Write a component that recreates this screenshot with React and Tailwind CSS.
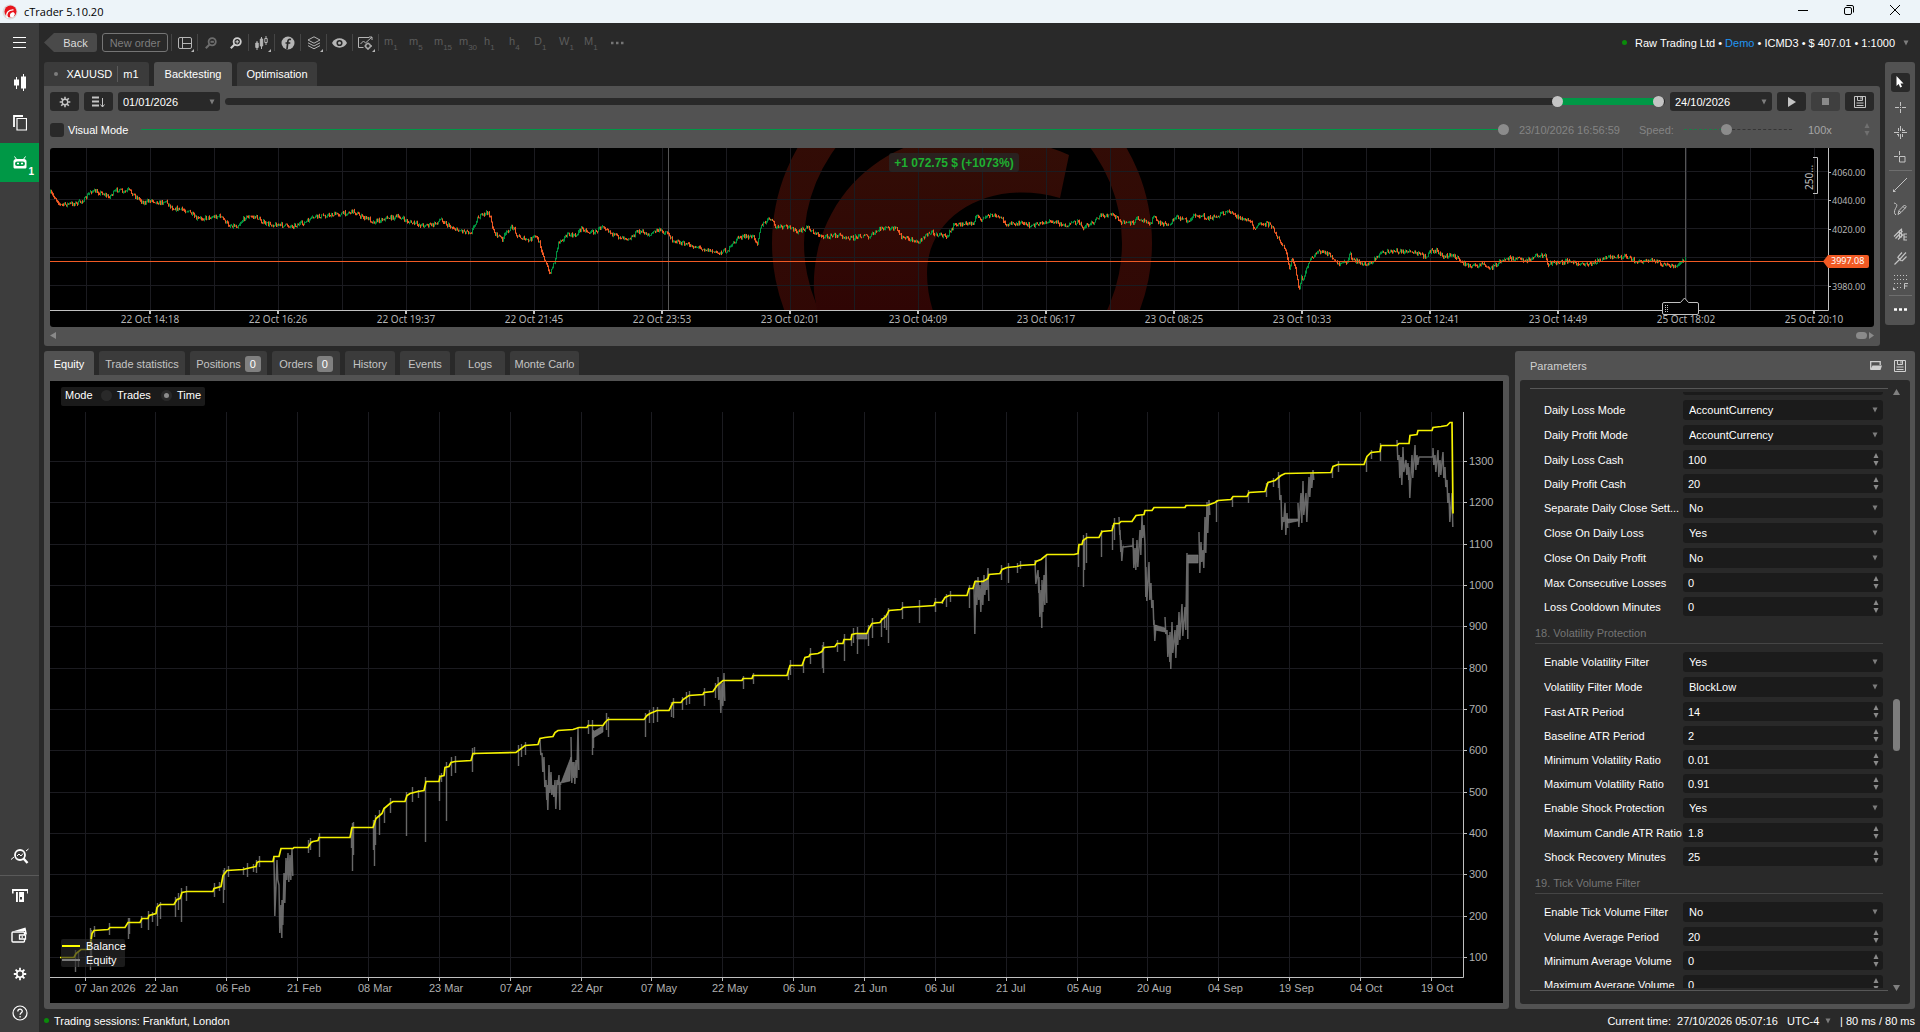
import React from 'react';

// price path of the upper chart, [x, y]
const pricePath = [
  [50, 193], [55, 198], [60, 205], [78, 203], [85, 199], [90, 191], [102, 193], [108, 197], [118, 189], [123, 193],
  [128, 190], [136, 197], [144, 203], [151, 200], [159, 203], [165, 201], [172, 208], [188, 211], [196, 219], [220, 216],
  [228, 225], [237, 226], [245, 217], [256, 217], [265, 224], [292, 226], [304, 223], [314, 217], [347, 213], [353, 211],
  [361, 217], [369, 219], [373, 222], [386, 218], [399, 217], [408, 222], [420, 225], [433, 225], [441, 219], [447, 225],
  [457, 230], [471, 232], [477, 218], [488, 212], [494, 233], [502, 239], [508, 230], [513, 227], [517, 236], [528, 241],
  [535, 236], [539, 243], [545, 262], [549, 274], [554, 262], [558, 242], [567, 235], [575, 236], [581, 228], [588, 232],
  [596, 232], [602, 225], [608, 230], [614, 236], [630, 238], [638, 231], [650, 235], [656, 230], [668, 233], [670, 239],
  [683, 244], [701, 248], [717, 253], [728, 250], [738, 237], [754, 237], [757, 243], [760, 227], [770, 218], [775, 227],
  [791, 227], [797, 233], [807, 227], [815, 234], [826, 237], [836, 235], [852, 238], [864, 235], [868, 238], [881, 228],
  [896, 229], [901, 237], [917, 242], [931, 232], [946, 237], [954, 225], [973, 223], [975, 217], [983, 219], [990, 215],
  [1001, 218], [1007, 225], [1017, 223], [1032, 226], [1044, 222], [1056, 222], [1066, 226], [1077, 222], [1083, 227],
  [1093, 222], [1099, 216], [1113, 215], [1122, 223], [1132, 223], [1138, 218], [1150, 223], [1153, 217], [1160, 224],
  [1171, 223], [1175, 217], [1189, 221], [1195, 215], [1211, 218], [1224, 213], [1230, 212], [1240, 218], [1250, 222],
  [1255, 230], [1260, 222], [1270, 225], [1280, 242], [1283, 245], [1287, 258], [1289, 270], [1291, 260], [1295, 268],
  [1297, 281], [1299, 290], [1301, 275], [1303, 281], [1307, 265], [1312, 258], [1317, 251], [1323, 253], [1330, 255],
  [1337, 265], [1347, 262], [1349, 253], [1353, 260], [1367, 265], [1375, 258], [1383, 252], [1398, 251], [1413, 253],
  [1427, 257], [1430, 251], [1437, 251], [1443, 257], [1452, 255], [1463, 263], [1472, 267], [1482, 263], [1489, 269],
  [1498, 263], [1507, 258], [1527, 260], [1537, 255], [1545, 256], [1548, 264], [1567, 261], [1577, 264], [1593, 263],
  [1607, 257], [1627, 257], [1637, 262], [1657, 261], [1663, 265], [1675, 267], [1683, 261], [1685, 260],
];

const timeTicks = [
  [150, '22 Oct 14:18'], [278, '22 Oct 16:26'], [406, '22 Oct 19:37'], [534, '22 Oct 21:45'], [662, '22 Oct 23:53'],
  [790, '23 Oct 02:01'], [918, '23 Oct 04:09'], [1046, '23 Oct 06:17'], [1174, '23 Oct 08:25'], [1302, '23 Oct 10:33'],
  [1430, '23 Oct 12:41'], [1558, '23 Oct 14:49'], [1686, '25 Oct 18:02'], [1814, '25 Oct 20:10'],
];

const priceTicks = [[171, '4060.00'], [199, '4040.00'], [228, '4020.00'], [257, ''], [285, '3980.00']];

const balance = `60,957 74,957 76,953 81,949 89,949 91,940 92,933 94,930 108,929 110,927 125,927 128,922 140,922 142,918 148,918 149,915
156,913 157,907 160,904 174,904 177,899 180,898 182,892 187,891 213,891 214,888 221,886 223,875 227,870 243,869 247,868 256,866
257,862 259,861 273,861 274,856 279,856 281,848 293,848 294,847 308,847 311,842 313,841 318,840 319,837 350,837 352,827 373,827
376,818 382,813 384,808 390,803 393,801 405,801 407,795 410,793 418,791 424,790 426,781 439,781 440,776 444,775 445,767 449,766
451,762 455,761 471,760 473,753 516,752 525,745 538,744 540,738 545,737 553,736 555,732 558,730 573,729 579,727 587,727 588,725
603,725 605,722 608,719 644,719 647,715 650,713 657,710 669,710 673,702 681,702 683,699 689,695 703,694 704,692 713,691 717,685
723,680 742,680 743,678 752,678 753,675 787,675 790,665 802,665 805,657 809,656 810,654 818,653 822,651 824,647 835,646 837,643
843,643 844,639 851,639 852,634 856,633 867,633 869,628 872,623 880,622 882,619 886,616 889,610 901,609 903,607 920,606 934,605
935,602 942,602 945,597 949,595 967,595 969,588 973,588 975,581 983,581 988,578 989,574 1000,573 1002,569 1007,567 1017,566
1020,565 1035,564 1036,561 1041,559 1047,554 1074,554 1078,553 1079,544 1082,544 1083,540 1087,537 1099,537 1102,531 1112,530
1114,523 1119,523 1121,521 1132,521 1136,515 1144,514 1145,510 1152,510 1154,507 1185,507 1186,505 1207,505 1215,502 1218,500
1231,499 1233,496 1247,496 1249,492 1265,491 1268,482 1275,480 1281,475 1285,473 1331,472 1333,466 1338,464 1364,464 1367,456
1371,452 1380,451 1381,445 1397,445 1399,443 1409,443 1410,435 1417,434 1418,430 1432,430 1433,427 1441,426 1447,425 1450,422
1452,422 1453,513`;

// single equity dips, [x, top, bottom]
const dips = [
  [75, 950, 972], [78, 952, 967], [90, 928, 970], [91, 930, 964], [94, 926, 937], [109, 923, 935], [128, 918, 939], [129, 918, 934],
  [141, 916, 928], [148, 911, 930], [152, 912, 922], [157, 903, 926], [160, 902, 919], [175, 897, 917], [178, 893, 910],
  [181, 888, 922], [186, 886, 901], [214, 883, 897], [219, 882, 891], [223, 870, 903], [224, 868, 890], [228, 866, 877],
  [243, 867, 875], [247, 863, 877], [253, 864, 872], [256, 860, 873], [259, 856, 867], [308, 840, 853], [310, 838, 850],
  [319, 833, 857], [351, 828, 848], [352, 823, 871], [353, 822, 855], [373, 820, 850], [374, 820, 866], [375, 815, 845], [379, 810, 835], [384, 807, 823],
  [390, 798, 813], [406, 792, 836], [412, 787, 802], [418, 790, 798], [425, 777, 842], [439, 775, 801], [441, 773, 782],
  [446, 762, 821], [451, 757, 776], [455, 756, 773], [472, 748, 772], [474, 747, 755], [518, 745, 766], [521, 744, 757],
  [525, 742, 755], [588, 720, 734], [592, 720, 755], [593, 730, 748], [606, 713, 730], [608, 717, 737], [645, 713, 737], [649, 710, 723],
  [653, 707, 723], [657, 707, 722], [671, 702, 717], [673, 698, 718], [682, 697, 710], [686, 692, 705], [689, 691, 704],
  [704, 688, 706], [715, 683, 698], [743, 676, 689], [753, 673, 684], [788, 668, 680], [790, 660, 675], [803, 662, 673],
  [810, 648, 664], [822, 645, 668], [823, 642, 673], [837, 640, 652], [844, 634, 661], [851, 634, 646], [853, 628, 643], [857, 627, 654],
  [868, 625, 646], [872, 618, 638], [881, 618, 637], [884, 615, 628], [886, 614, 630], [888, 608, 643], [902, 602, 619],
  [919, 600, 623], [935, 598, 612], [942, 600, 604], [946, 594, 607], [950, 591, 602], [969, 585, 608], [1001, 565, 580],
  [1008, 563, 583], [1017, 563, 573], [1020, 561, 569], [1078, 547, 567], [1083, 535, 587], [1084, 540, 570], [1086, 533, 563], [1101, 530, 557],
  [1112, 525, 550], [1114, 518, 540], [1216, 500, 522], [1232, 497, 507], [1248, 490, 503], [1266, 483, 497], [1273, 478, 487],
  [1278, 472, 488], [1332, 468, 478], [1338, 461, 472], [1366, 458, 472], [1371, 450, 459], [1380, 443, 461],
];

// longer drawdowns, every sample is [x, top, bottom]
const drawdowns = [
  [[274, 858, 916], [277, 860, 880], [279, 885, 933], [281, 905, 938], [282, 900, 925], [284, 873, 903], [286, 858, 880], [288, 853, 882], [290, 855, 880], [292, 848, 876]],
  [[540, 740, 755], [542, 753, 772], [544, 757, 787], [546, 780, 800], [547, 785, 810], [549, 765, 793], [551, 772, 795], [553, 785, 797], [555, 780, 809], [557, 780, 785], [559, 775, 810], [560, 782, 785]],
  [[571, 737, 783], [573, 762, 778], [574, 762, 784], [576, 760, 778], [578, 727, 770]],
  [[718, 677, 700], [720, 683, 713], [722, 683, 706], [724, 673, 701]],
  [[974, 586, 634], [976, 580, 605], [978, 577, 600], [980, 585, 612], [982, 580, 605], [984, 575, 595], [986, 580, 590], [988, 568, 601]],
  [[1035, 560, 584], [1038, 570, 593], [1039, 577, 617], [1041, 590, 628], [1042, 580, 612], [1044, 575, 605], [1046, 555, 603]],
  [[1119, 517, 535], [1120, 530, 552], [1121, 540, 561], [1123, 546, 547], [1132, 546, 547], [1133, 538, 568], [1135, 548, 570], [1137, 540, 567], [1140, 530, 555],
    [1142, 515, 538], [1144, 525, 540], [1145, 545, 597], [1146, 567, 601], [1149, 562, 600], [1151, 583, 608], [1153, 600, 625], [1154, 620, 641], [1156, 625, 630]],
  [[1165, 617, 634], [1167, 630, 657], [1169, 635, 662], [1170, 632, 669], [1172, 622, 653], [1175, 630, 658], [1177, 625, 645], [1179, 612, 640], [1182, 604, 636], [1185, 607, 630], [1187, 553, 639], [1188, 555, 563]],
  [[1199, 532, 573], [1201, 542, 562], [1203, 550, 568], [1205, 517, 553], [1207, 502, 533], [1209, 500, 515]],
  [[1279, 475, 500], [1281, 495, 530], [1283, 517, 522], [1285, 503, 535], [1287, 513, 528]],
  [[1298, 503, 527], [1301, 493, 523], [1303, 481, 515], [1306, 493, 522], [1309, 477, 497], [1311, 473, 488], [1313, 470, 480]],
  [[1397, 440, 460], [1399, 455, 478], [1401, 457, 485], [1403, 447, 472], [1406, 460, 475], [1408, 463, 480], [1409, 467, 498], [1412, 455, 478], [1415, 445, 470],
    [1417, 455, 465], [1419, 457, 457], [1432, 457, 457], [1433, 448, 465], [1435, 455, 472], [1438, 450, 477], [1440, 460, 475], [1443, 452, 478], [1445, 467, 487], [1447, 480, 503], [1449, 493, 522], [1452, 493, 527]],
];

const equityGaps = [
  '561,783 571,757 570,781',
  '593,732 603,726 603,732 593,738',
  '857,634 867,634 867,639 857,639',
  '1155,625 1165,628 1165,632 1155,630',
  '1188,555 1198,555 1198,563 1188,563',
  '1287,519 1298,519 1298,521 1288,523',
];

const monthTicks = [
  [85, '07 Jan 2026'], [155, '22 Jan'], [226, '06 Feb'], [297, '21 Feb'], [368, '08 Mar'], [439, '23 Mar'], [510, '07 Apr'],
  [581, '22 Apr'], [651, '07 May'], [722, '22 May'], [793, '06 Jun'], [864, '21 Jun'], [935, '06 Jul'], [1006, '21 Jul'],
  [1077, '05 Aug'], [1147, '20 Aug'], [1218, '04 Sep'], [1289, '19 Sep'], [1360, '04 Oct'], [1431, '19 Oct'],
];

const cashTicks = [
  [461, 1300], [502, 1200], [544, 1100], [585, 1000], [626, 900], [668, 800], [709, 700],
  [750, 600], [792, 500], [833, 400], [874, 300], [916, 200], [957, 100],
];

const params = [
  ['select', 'Daily Loss Mode', 'AccountCurrency'],
  ['select', 'Daily Profit Mode', 'AccountCurrency'],
  ['number', 'Daily Loss Cash', '100'],
  ['number', 'Daily Profit Cash', '20'],
  ['select', 'Separate Daily Close Sett...', 'No'],
  ['select', 'Close On Daily Loss', 'Yes'],
  ['select', 'Close On Daily Profit', 'No'],
  ['number', 'Max Consecutive Losses', '0'],
  ['number', 'Loss Cooldown Minutes', '0'],
  ['heading', '18. Volatility Protection'],
  ['select', 'Enable Volatility Filter', 'Yes'],
  ['select', 'Volatility Filter Mode', 'BlockLow'],
  ['number', 'Fast ATR Period', '14'],
  ['number', 'Baseline ATR Period', '2'],
  ['number', 'Minimum Volatility Ratio', '0.01'],
  ['number', 'Maximum Volatility Ratio', '0.91'],
  ['select', 'Enable Shock Protection', 'Yes'],
  ['number', 'Maximum Candle ATR Ratio', '1.8'],
  ['number', 'Shock Recovery Minutes', '25'],
  ['heading', '19. Tick Volume Filter'],
  ['select', 'Enable Tick Volume Filter', 'No'],
  ['number', 'Volume Average Period', '20'],
  ['number', 'Minimum Average Volume', '0'],
  ['number', 'Maximum Average Volume', '0'],
];

const buildCandles = () => {
  let seed = 7;
  const rnd = () => {
    seed = (seed * 16807) % 2147483647;
    return seed / 2147483647;
  };
  let up = '';
  let down = '';
  let prev = pricePath[0][1];
  let i = 0;
  for (let x = 50; x <= 1685; x += 1) {
    while (i < pricePath.length - 2 && pricePath[i + 1][0] < x) i += 1;
    const [x0, y0] = pricePath[i];
    const [x1, y1] = pricePath[i + 1];
    const y = y0 + ((y1 - y0) * (x - x0)) / (x1 - x0) + (rnd() - 0.5) * 4;
    const top = Math.min(prev, y) - rnd() * 1.6;
    const bottom = Math.max(prev, y) + rnd() * 1.6;
    const bar = `M${x + 0.5} ${top.toFixed(1)}V${bottom.toFixed(1)}`;
    if (y < prev) up += bar;
    else down += bar;
    prev = y;
  }
  return { up, down };
};

const candles = buildCandles();

const Icon = ({ w = 16, h = 16, box, children, className = '' }) => (
  <svg
    width={w}
    height={h}
    viewBox={box || `0 0 ${w} ${h}`}
    fill="none"
    stroke="currentColor"
    aria-hidden="true"
    className={`shrink-0 ${className}`}
  >
    {children}
  </svg>
);

const GearIcon = ({ size = 14 }) => (
  <Icon w={size} h={size} box="0 0 14 14">
    <circle cx="7" cy="7" r="3.2" strokeWidth="1.6" />
    <path strokeWidth="1.8" d="M7 .8v2.6M7 10.6v2.6M.8 7h2.6M10.6 7h2.6M2.6 2.6l1.9 1.9M9.5 9.5l1.9 1.9M11.4 2.6L9.5 4.5M4.5 9.5l-1.9 1.9" />
  </Icon>
);

const SaveIcon = () => (
  <Icon w={12} h={12}>
    <path d="M.5.5h11v11H.5z" />
    <path d="M3.500 1v3.500h5V1M7 1v2.500M2.500 7h7M2.500 9.500h7" />
  </Icon>
);

const DownArrow = ({ className = '' }) => (
  <Icon w={6} h={6} className={`pointer-events-none text-[#7d7d7d] ${className}`}>
    <path d="M.5.5h5L3 5.500z" fill="currentColor" stroke="none" />
  </Icon>
);

const Spinner = ({ className = '' }) => (
  <Icon w={6} h={13} className={`pointer-events-none ${className}`}>
    <path d="M3 0l2.500 5h-5zM3 13L.5 8h5z" fill="currentColor" stroke="none" />
  </Icon>
);

const Grip = () => (
  <div className="w-5 h-[4px] bg-[radial-gradient(#a5a5a5_45%,transparent_50%)] bg-[length:2px_2px]" />
);

const TitleBar = () => (
  <header className="flex items-center h-[23px] shrink-0 bg-[#edf4f9] text-black">
    <Icon w={16} h={16} className="ml-[2px]">
      <circle cx="8" cy="8" r="7.500" fill="#dcdcdc" stroke="none" />
      <circle cx="8.500" cy="7.500" r="6" fill="#e8141c" stroke="none" />
      <path d="M5.500 14C3.500 9.500 6 5.500 11.500 5.800" stroke="#fff" strokeWidth="1.300" />
      <path d="M8.500 13.500c-1.500-3 .3-5.500 3.200-5.200L13 10l-1.500 3z" fill="#fff" stroke="none" />
    </Icon>
    <h1 className="ml-[6px] text-[11px] leading-4 font-['Open_Sans',sans-serif]">cTrader 5.10.20</h1>
    <div className="ml-auto pr-[2px] flex self-start">
      <button type="button" aria-label="Minimize" className="w-[46px] h-[20px] grid place-items-center">
        <Icon w={10} h={10}><path d="M0 5.500h10" /></Icon>
      </button>
      <button type="button" aria-label="Restore" className="w-[46px] h-[20px] grid place-items-center">
        <Icon w={10} h={10}>
          <rect x=".5" y="2.500" width="7" height="7" rx="1.500" />
          <path d="M2.500.5h5.500a1.500 1.500 0 011.500 1.500v5.500" />
        </Icon>
      </button>
      <button type="button" aria-label="Close" className="w-[46px] h-[20px] grid place-items-center">
        <Icon w={10} h={10}><path d="M0 0l10 10M10 0L0 10" /></Icon>
      </button>
    </div>
  </header>
);

const SideButton = ({ label, children, className = '' }) => (
  <button type="button" aria-label={label} className={`relative h-[39px] w-full grid place-items-center text-white ${className}`}>
    {children}
  </button>
);

const Sidebar = () => (
  <nav className="w-[39px] shrink-0 bg-[#3d3d3d] flex flex-col justify-between">
    <div className="flex flex-col gap-px">
      <SideButton label="Menu">
        <Icon w={13} h={13}><path d="M0 1.500h13M0 6.500h13M0 11.500h13" /></Icon>
      </SideButton>
      <SideButton label="Trade">
        <Icon w={14} h={17}>
          <path d="M3.500 3v12M10.500 0v17" />
          <path d="M1 5.500h5v6H1zM8 2.500h5v12H8z" fill="currentColor" stroke="none" />
        </Icon>
      </SideButton>
      <SideButton label="Copy">
        <Icon w={14} h={16}>
          <path d="M4 3.500h9.500v11.500H4z" strokeWidth="1.200" />
          <path d="M1 12V1h9" strokeWidth="1.800" />
        </Icon>
      </SideButton>
      <SideButton label="Algo" className="bg-[#009846]">
        <Icon w={14} h={14}>
          <path d="M1.500.5L4 4M12.500.5L10 4" />
          <path d="M3 3h8c1.500 0 2.500 1 2.500 2.500V11c0 1-.8 1.500-1.500 1.500H2c-.7 0-1.500-.5-1.500-1.500V5.500C.5 4 1.500 3 3 3z" fill="currentColor" stroke="none" />
          <rect x="2" y="5.500" width="10" height="4.500" rx="2.200" fill="#009846" stroke="none" />
          <path d="M4 7.500h2M8 7.500h2" strokeWidth="1.600" />
        </Icon>
        <span className="absolute right-[5px] bottom-[2px] text-[10px] leading-4 font-bold">1</span>
      </SideButton>
    </div>
    <div className="flex flex-col">
      <SideButton label="Analyze" className="border-b border-[#5a5a5a]">
        <Icon w={18} h={16}>
          <circle cx="9" cy="7" r="5" strokeWidth="1.800" />
          <path d="M12.500 10.500l4 4.500" strokeWidth="2.400" />
          <path d="M0 11.500L3 9M15 3l2.500-2M6 8l2-2 2 2 2-2.500" />
        </Icon>
      </SideButton>
      <SideButton label="Deposit">
        <Icon w={16} h={13}>
          <path d="M0 1h16v3.500" strokeWidth="1.800" />
          <path d="M.8 1v3.500" strokeWidth="1.600" />
          <path d="M4 3h8V13H4z" fill="currentColor" stroke="none" />
          <path d="M6.500 3v10" stroke="#3d3d3d" strokeWidth="1.200" />
          <path d="M8 8h2v2.500H8z" fill="#3d3d3d" stroke="none" />
        </Icon>
      </SideButton>
      <SideButton label="Wallet">
        <Icon w={17} h={16}>
          <rect x="1" y="5" width="12.500" height="10" rx="1" strokeWidth="1.400" />
          <path d="M3 4L14.500.5l1.500 7-2-.5V4z" fill="currentColor" stroke="none" />
          <path d="M8.500 8h6v4h-6z" fill="#3d3d3d" strokeWidth="1.300" />
          <path d="M10.500 10h1.500" strokeWidth="1.500" />
        </Icon>
      </SideButton>
      <SideButton label="Settings"><GearIcon size={14} /></SideButton>
      <SideButton label="Help">
        <Icon w={16} h={16}>
          <circle cx="8" cy="8" r="7" strokeWidth="1.200" />
          <path d="M5.800 6.500c0-3 4.500-3 4.500-.3 0 1.600-2.200 1.700-2.200 3.600M8.100 11v1.500" strokeWidth="1.300" />
        </Icon>
      </SideButton>
    </div>
  </nav>
);

const ToolButton = ({ label, children, divided = true, menu = false }) => (
  <>
    {divided && <span className="w-px h-[17px] bg-[#454545]" />}
    <button type="button" aria-label={label} className="relative w-[25px] h-[20px] grid place-items-center text-[#b5b5b5]">
      {children}
      {menu && (
        <Icon w={3} h={3} className="absolute right-[3px] bottom-[1px]">
          <path d="M3 0v3H0z" fill="currentColor" stroke="none" />
        </Icon>
      )}
    </button>
  </>
);

const periods = [['m', '1'], ['m', '5'], ['m', '15'], ['m', '30'], ['h', '1'], ['h', '4'], ['D', '1'], ['W', '1'], ['M', '1']];

const Toolbar = () => (
  <div className="flex items-center h-[39px] shrink-0 px-[5px]">
    <button type="button" className="w-[53px] h-[19px] pl-[10px] rounded-r-[3px] bg-[#4a4a4a] text-[#dcdcdc] [clip-path:polygon(0_50%,10px_0,100%_0,100%_100%,10px_100%)]">
      Back
    </button>
    <button type="button" className="w-[66px] h-[19px] ml-[5px] mr-[3px] rounded-[3px] border border-[#757575] text-[#7d7d7d]">
      New order
    </button>
    <ToolButton label="Layout" menu>
      <Icon w={14} h={12}><rect x=".5" y=".5" width="13" height="11" rx="1.500" /><path d="M4.500.5v11M4.500 6.500h9" /></Icon>
    </ToolButton>
    <ToolButton label="Zoom out">
      <Icon w={12} h={12} className="text-[#6d6d6d]">
        <circle cx="7.200" cy="4.800" r="3.600" strokeWidth="1.800" /><path d="M4.500 7.500L.8 11.200" strokeWidth="2" /><path d="M5.500 4.800h3.400" strokeWidth="2" />
      </Icon>
    </ToolButton>
    <ToolButton label="Zoom in" divided={false}>
      <Icon w={12} h={12} className="text-[#cfcfcf]">
        <circle cx="7.200" cy="4.800" r="3.600" strokeWidth="1.800" /><path d="M4.500 7.500L.8 11.200" strokeWidth="2" /><path d="M5.500 4.800h3.400M7.200 3v3.600" />
      </Icon>
    </ToolButton>
    <ToolButton label="Chart type" menu>
      <Icon w={13} h={14}>
        <path d="M2 5v9M6.500 1v12M11 0v9" /><path d="M.8 7h2.400v4.500H.8zM5.300 3h2.400v7H5.300z" fill="currentColor" /><path d="M9.800 2.500h2.400v4H9.800z" fill="#292929" />
      </Icon>
    </ToolButton>
    <ToolButton label="Indicators">
      <Icon w={14} h={14}>
        <circle cx="7" cy="7" r="6.500" fill="currentColor" stroke="none" />
        <path d="M10 3.500C7.500 2.800 7 4 6.800 6L6 13M4.500 7h4.800" stroke="#292929" strokeWidth="1.700" />
      </Icon>
    </ToolButton>
    <ToolButton label="Layers" menu>
      <Icon w={14} h={14}><path d="M7 .8l6 3.200-6 3.200L1 4zM1 6.800L7 10l6-3.200M1 9.600l6 3.200 6-3.200" /></Icon>
    </ToolButton>
    <ToolButton label="Visibility">
      <Icon w={15} h={10}>
        <path d="M0 5C3-1.200 12-1.200 15 5 12 11.200 3 11.200 0 5z" fill="currentColor" stroke="none" />
        <circle cx="7.500" cy="5" r="2.300" stroke="#292929" strokeWidth="1.600" />
      </Icon>
    </ToolButton>
    <ToolButton label="Chart settings" menu>
      <Icon w={15} h={14}>
        <path d="M5.500 11.500H.5V1.500H11M2.500 8l3-3 2 2L14 1M11 1h3v3" />
        <circle cx="10" cy="10" r="2.300" strokeWidth="1.300" /><path d="M10 6.500v1M10 12.500v1.500M6.500 10h1M12.500 10H14" strokeWidth="1.300" />
      </Icon>
    </ToolButton>
    <span className="w-px h-[17px] bg-[#454545]" />
    {periods.map(([unit, n]) => (
      <button key={unit + n} type="button" className="w-[25px] h-[20px] pl-[5px] flex text-[#5c5c5c]">
        <span className="text-[11px] leading-4">{unit}</span>
        <sub className="self-end text-[8px] leading-[10px] bottom-0">{n}</sub>
      </button>
    ))}
    <button type="button" aria-label="More" className="w-[25px] h-[20px] grid place-items-center text-[#757575]">
      <Icon w={14} h={4}><path d="M1 2h2.500M6 2h2.500M11 2h2.500" strokeWidth="2.500" /></Icon>
    </button>
    <div className="ml-auto flex items-center text-white pr-[6px]">
      <span className="size-[5px] rounded-full bg-[#0a8a0a] mr-[8px]" />
      <span>Raw Trading Ltd • <a href="#demo" className="text-[#2196f3]">Demo</a> • ICMD3 • $ 407.01 • 1:1000</span>
      <DownArrow className="ml-[8px]" />
    </div>
  </div>
);

const DateSelect = ({ label, value }) => (
  <div className="relative flex items-center w-[102px]">
    <select aria-label={label} className="appearance-none w-full h-[19px] pl-[5px] rounded-[3px] bg-[#292929] text-white">
      <option>{value}</option>
    </select>
    <DownArrow className="absolute right-[5px]" />
  </div>
);

const SquareButton = ({ label, children, disabled }) => (
  <button
    type="button"
    aria-label={label}
    disabled={disabled}
    className="w-[29px] h-[19px] grid place-items-center rounded-[3px] bg-[#292929] text-[#c4c4c4] disabled:bg-[#3f3f3f] disabled:text-[#8a8a8a]"
  >
    {children}
  </button>
);

const DateRange = () => (
  <div className="relative flex-1 h-[19px] flex items-center">
    <div className="w-full h-[7px] rounded-full bg-[#292929] flex">
      <div className="ml-[92.6%] w-[7%] bg-[#009846]" />
    </div>
    <span className="absolute left-[92.6%] -ml-[6px] size-[11px] rounded-full bg-[#c4c4c4]" />
    <span className="absolute left-[99.6%] -ml-[6px] size-[11px] rounded-full bg-[#c4c4c4]" />
    <input type="range" aria-label="Range start" min="0" max="1000" defaultValue="926" className="absolute inset-0 w-full opacity-0" />
    <input type="range" aria-label="Range end" min="0" max="1000" defaultValue="996" className="absolute inset-0 w-full opacity-0" />
  </div>
);

const PriceChart = () => (
  <svg viewBox="50 148 1824 179" className="block w-full rounded-[3px] bg-black font-['Noto_Sans',sans-serif]" role="img" aria-label="XAUUSD m1 chart">
    <defs>
      <clipPath id="plot"><rect x="50" y="148" width="1778" height="162" /></clipPath>
      <linearGradient id="mark" x1="0" y1="0" x2="0" y2="1">
        <stop offset="0" stopColor="#330e06" />
        <stop offset="1" stopColor="#2f0504" />
      </linearGradient>
    </defs>
    <g clipPath="url(#plot)" fill="url(#mark)">
      <path fillRule="evenodd" d="M772 243a190 190 0 10380 0a190 190 0 10-380 0zM804 243a159 159 0 10318 0a159 159 0 10-318 0z" />
      <path d="M814 292C810 200 885 130 975 136C1015 138 1045 144 1069 155L1060 198C990 178 927 215 927 273Q927 292 933 311H817z" />
    </g>
    <path
      stroke="#1b1b20"
      d={`${timeTicks.map(([x]) => `M${x - 63.5} 148V310M${x + 0.5} 148V310`).join('')}M1750.5 148V310${priceTicks.map(([y]) => `M50 ${y + 0.5}H1828`).join('')}`}
    />
    <path stroke="#565656" d="M668.5 148V310M1685.500 148V310" />
    <path stroke="#00923f" d={candles.up} />
    <path stroke="#f15a24" d={candles.down} />
    <path stroke="#f15a24" strokeWidth="1" d="M50 261.500H1826" />
    <path stroke="#c0c0c0" fill="none" d="M50 310.500H1828.500V148" />
    <path stroke="#c0c0c0" strokeWidth="2" d={timeTicks.map(([x]) => `M${x} 311v3`).join('')} />
    <g fill="#b4b4b4" fontSize="10" textAnchor="middle">
      {timeTicks.map(([x, label]) => <text key={label} x={x} y="323">{label}</text>)}
    </g>
    <g fill="#b4b4b4" fontSize="9">
      {priceTicks.filter(([, label]) => label).map(([y, label]) => (
        <g key={label}>
          <path stroke="#c0c0c0" d={`M1829 ${y + 1.5}h2`} />
          <text x="1832" y={y + 5}>{label}</text>
        </g>
      ))}
    </g>
    <path d="M1823 261.500l5-6.500h39q2 0 2 2v9q0 2-2 2h-39z" fill="#f15a24" />
    <text x="1831" y="264" fontSize="9" fill="#fff">3997.08</text>
    <path fill="#000" stroke="#c0c0c0" d="M1664 302.500h16.500l4-4.500l4 4.500h8.500q1.500 0 1.500 1.500v9q0 1.500-1.500 1.500h-33q-1.500 0-1.500-1.500v-9q0-1.500 1.500-1.500z" />
    <path stroke="#c0c0c0" strokeDasharray="1 1" d="M1665.500 305v7M1667.500 305v7" />
    <path stroke="#c0c0c0" fill="none" d="M1813 157.500h4.500v36h-4.500" />
    <text transform="translate(1813 190) rotate(-90)" fontSize="10" fill="#c0c0c0">250...</text>
    <rect x="889" y="153" width="130" height="19" rx="3" fill="#282828" fillOpacity=".75" />
    <text x="954" y="167" textAnchor="middle" fontSize="12" fontWeight="700" fill="#1fb030" className="font-['Liberation_Sans',sans-serif]">+1 072.75 $ (+1073%)</text>
  </svg>
);

const topTab = 'h-6 rounded-t-[3px] bg-[#3b3b3b] text-white flex items-center justify-center';

const Backtesting = () => (
  <section className="flex-1 min-w-0">
    <div className="flex gap-[5px]">
      <button type="button" className={`${topTab} w-[105px]`}>
        <span className="size-1 rounded-full bg-[#7d7d7d] mr-2" />
        XAUUSD
        <span className="w-px h-4 bg-[#5a5a5a] mx-[5px]" />
        m1
      </button>
      <button type="button" className="h-6 w-[78px] rounded-t-[3px] bg-[#525252] text-white">Backtesting</button>
      <button type="button" className={`${topTab} w-20`}>Optimisation</button>
    </div>
    <div className="rounded-[3px] rounded-tl-none bg-[#525252] px-[6px] pt-[6px]">
      <div className="flex gap-[5px]">
        <SquareButton label="Settings"><GearIcon size={12} /></SquareButton>
        <SquareButton label="Optimisation order">
          <Icon w={13} h={12}>
            <path d="M0 1.500h7M0 5.500h7M0 9.500h7" strokeWidth="2" /><path d="M10.500 2v9M8.500 8.500l2 2.500 2-2.500" />
          </Icon>
        </SquareButton>
        <DateSelect label="From" value="01/01/2026" />
        <DateRange />
        <DateSelect label="To" value="24/10/2026" />
        <SquareButton label="Start">
          <Icon w={8} h={10}><path d="M0 0l8 5-8 5z" fill="currentColor" stroke="none" /></Icon>
        </SquareButton>
        <SquareButton label="Stop" disabled>
          <Icon w={7} h={7}><path d="M0 0h7v7H0z" fill="currentColor" stroke="none" /></Icon>
        </SquareButton>
        <SquareButton label="Save"><SaveIcon /></SquareButton>
      </div>
      <div className="flex items-center h-[37px]">
        <label className="flex items-center w-[91px] text-white">
          <input type="checkbox" className="appearance-none size-[14px] mr-1 rounded-[3px] bg-[#292929]" />
          Visual Mode
        </label>
        <div className="relative flex-1 flex items-center h-[13px]">
          <div className="w-full h-px bg-[#009846]" />
          <span className="absolute -right-px size-[11px] rounded-full bg-[#8c8c8c]" />
          <input type="range" aria-label="Progress" defaultValue="100" disabled className="absolute inset-0 w-full opacity-0" />
        </div>
        <span className="w-[131px] pl-[11px] text-[#848484]">23/10/2026 16:56:59</span>
        <label htmlFor="speed" className="w-[45px] text-[#848484]">Speed:</label>
        <div className="relative w-[108px] flex items-center h-[13px]">
          <span className="w-2/5 border-t border-dashed border-[#1f7a48]" />
          <span className="w-3/5 border-t border-dashed border-[#353535]" />
          <span className="absolute left-[37px] size-[11px] rounded-full bg-[#8c8c8c]" />
          <input id="speed" type="range" defaultValue="40" disabled className="absolute inset-0 w-full opacity-0" />
        </div>
        <div className="w-[82px] pl-4 pr-1 flex items-center justify-between text-[#a5a5a5]">
          100x
          <Spinner className="text-[#707070]" />
        </div>
      </div>
      <PriceChart />
      <div className="flex items-center justify-between h-[19px] pb-[3px] text-[#8a8a8a]">
        <Icon w={6} h={7}><path d="M6 0v7L0 3.500z" fill="currentColor" stroke="none" /></Icon>
        <Icon w={18} h={7}>
          <rect width="11" height="7" rx="3.500" fill="currentColor" stroke="none" /><path d="M13 0v7l5-3.500z" fill="currentColor" stroke="none" />
        </Icon>
      </div>
    </div>
  </section>
);

const DrawButton = ({ label, active, children }) => (
  <button type="button" aria-label={label} className={`w-[19px] h-[19px] mb-[6px] grid place-items-center rounded-[3px] text-[#c4c4c4] ${active ? 'bg-[#292929]' : ''}`}>
    {children}
  </button>
);

const DrawTools = () => (
  <aside className="w-[30px] h-[263px] shrink-0 rounded-[3px] bg-[#525252] pt-1 flex flex-col items-center">
    <Grip />
    <div className="pt-[3px] flex flex-col items-center">
      <DrawButton label="Pointer" active>
        <Icon w={8} h={12}><path d="M.5 0v10l2.200-2 1.500 3.500 1.800-.8L4.500 7.500H7.500z" fill="#fff" stroke="none" /></Icon>
      </DrawButton>
      <DrawButton label="Crosshair">
        <Icon w={11} h={11}><path d="M5.500 0v4M5.500 7v4M0 5.500h4M7 5.500h4M5 5.500h1" /></Icon>
      </DrawButton>
      <DrawButton label="Magnet crosshair">
        <Icon w={13} h={13}><path d="M6.500 0v5M6.500 8v5M0 6.500h5M8 6.500h5M4.500 2v3M8.500 8v3M3 8.500h2M8.500 4.500h2.500M4.500 8.500v2M8.500 2.500v2.500" /></Icon>
      </DrawButton>
      <DrawButton label="Marker">
        <Icon w={12} h={12}><path d="M5.500 0v4M0 5.500h4M5.500 5.500h5.500V11H5.500z" /></Icon>
      </DrawButton>
    </div>
    <div className="w-[23px] -mt-[3px] mb-1 border-t border-[#6e6e6e]" />
    <DrawButton label="Line">
      <Icon w={15} h={15}><path d="M1.500 13.500L14 1" /><path d="M0 12v3h3z" fill="currentColor" stroke="none" /></Icon>
    </DrawButton>
    <DrawButton label="Pencil">
      <Icon w={14} h={14}><path d="M1 1c4 1 3 3 1.500 5.500S1 12 3 13M5 12.500l1-4L11.500 3l1.800 1.800L8 10.500zM10 4.500l2 2M6 9l2 1.500" /></Icon>
    </DrawButton>
    <DrawButton label="Patterns">
      <Icon w={15} h={14}><path d="M1 9.500L8 2.500M2.500 11.500L9.500 4M5 12.500L10 7.500M6.500 3v9M8.500 1.500v9M14 7h-3v6h3M11 10h3" strokeWidth="1.200" /></Icon>
    </DrawButton>
    <DrawButton label="Pitchfork">
      <Icon w={13} h={14}><path d="M.5 13.500L8 6M3.500 6l4 4M4 6l4-4.500M6 8l6-6.500M8 10l4.500-4.500" strokeWidth="1.200" /></Icon>
    </DrawButton>
    <DrawButton label="Fibonacci">
      <Icon w={15} h={15}>
        <path strokeDasharray="1 2" d="M1 .5h14M1 4.500h14M1 8.500h9M4 12.500h6" /><path d="M11.500 14V8.500H15M11.500 11h3" /><path d="M0 12v3h3z" fill="currentColor" stroke="none" />
      </Icon>
    </DrawButton>
    <div className="w-[23px] -mt-[3px] mb-1 border-t border-[#6e6e6e]" />
    <DrawButton label="More tools">
      <Icon w={13} h={3} className="text-white"><path d="M0 1.500h3M5 1.500h3M10 1.500h3" strokeWidth="2.600" /></Icon>
    </DrawButton>
  </aside>
);

const EquityChart = () => (
  <svg viewBox="50 406 1453 597" className="block w-full flex-1 min-h-0 font-['Liberation_Sans',sans-serif]" role="img" aria-label="Balance and equity">
    <path
      stroke="#1b1b20"
      d={`${monthTicks.map(([x]) => `M${x + 0.5} 412V977`).join('')}${cashTicks.map(([y]) => `M50 ${y + 0.5}H1463`).join('')}`}
    />
    <g fill="none" stroke="#8a8a8a" strokeOpacity=".75">
      <path strokeWidth="1.4" d={dips.map(([x, top, bottom]) => `M${x + 0.5} ${top}V${bottom}`).join('')} />
      {drawdowns.map((zone) => (
        <polyline
          key={zone[0][0]}
          strokeWidth="1.5"
          strokeLinejoin="bevel"
          points={zone.map(([x, top, bottom]) => `${x},${top} ${x + 0.8},${bottom}`).join(' ')}
        />
      ))}
    </g>
    {equityGaps.map((points) => <polygon key={points} points={points} fill="#6b6b6b" stroke="#808080" strokeWidth=".6" />)}
    <polyline points={balance} fill="none" stroke="#f5f200" strokeWidth="1.7" transform="translate(0 .5)" />
    <path stroke="#c0c0c0" fill="none" d="M50 977.500H1463.500V412" />
    <path
      stroke="#c0c0c0"
      d={`${monthTicks.map(([x]) => `M${x + 0.5} 978v3`).join('')}${cashTicks.map(([y]) => `M1464 ${y + 0.5}h3`).join('')}`}
    />
    <g fill="#b0b0b0" fontSize="11">
      {monthTicks.map(([x, label]) => <text key={label} x={x - 10} y="992">{label}</text>)}
      {cashTicks.map(([y, label]) => <text key={label} x="1469" y={y + 4}>{label}</text>)}
    </g>
    <rect x="61" y="939" width="64" height="28" rx="2" fill="#2a2a2a" fillOpacity=".65" />
    <path stroke="#ffff00" strokeWidth="2" d="M62 946h18" />
    <path stroke="#7d7d7d" strokeWidth="2" d="M62 960h18" />
    <g fill="#fff" fontSize="11">
      <text x="86" y="950">Balance</text>
      <text x="86" y="964">Equity</text>
    </g>
  </svg>
);

const ResultTab = ({ width, active, count, children }) => (
  <button
    type="button"
    className={`${width} h-6 pt-px rounded-t-[3px] flex items-center justify-center whitespace-nowrap ${active ? 'bg-[#525252] text-white' : 'bg-[#3b3b3b] text-[#c4c4c4]'}`}
  >
    {children}
    {count && <span className="ml-[4px] w-4 h-4 rounded-[3px] bg-[#808080] text-white leading-4">{count}</span>}
  </button>
);

const Results = () => (
  <section className="flex-1 min-w-0 flex flex-col">
    <div className="flex gap-[5px]">
      <ResultTab width="w-[50px]" active>Equity</ResultTab>
      <ResultTab width="w-[86px]">Trade statistics</ResultTab>
      <ResultTab width="w-[77px]" count="0">Positions</ResultTab>
      <ResultTab width="w-[68px]" count="0">Orders</ResultTab>
      <ResultTab width="w-[50px]">History</ResultTab>
      <ResultTab width="w-[50px]">Events</ResultTab>
      <ResultTab width="w-[50px]">Logs</ResultTab>
      <ResultTab width="w-[69px]">Monte Carlo</ResultTab>
    </div>
    <div className="flex-1 min-h-0 flex rounded-[3px] rounded-tl-none bg-[#525252] p-[6px]">
      <div className="flex-1 min-w-0 flex flex-col bg-black pt-[6px]">
        <fieldset className="self-start flex items-center h-[19px] ml-[11px] px-[4px] rounded-[2px] bg-[#1a1a1a] text-white">
          <span className="w-9">Mode</span>
          <label className="flex items-center w-[60px]">
            <input type="radio" name="mode" className="appearance-none size-[11px] mr-[5px] rounded-full bg-[#292929]" />
            Trades
          </label>
          <label className="flex items-center">
            <input type="radio" name="mode" defaultChecked className="appearance-none size-[11px] mr-[5px] rounded-full border-[3px] border-[#292929] bg-[#8c8c8c]" />
            Time
          </label>
        </fieldset>
        <EquityChart />
      </div>
    </div>
  </section>
);

const ParamRow = ({ type, label, value, id }) => (
  <div className="flex items-center pl-[9px]">
    <label htmlFor={id} className="flex-1 min-w-0 whitespace-nowrap text-white">{label}</label>
    <div className="relative flex items-center w-[200px]">
      {type === 'select' ? (
        <>
          <select id={id} className="appearance-none w-full h-5 pl-[6px] rounded-[3px] bg-[#1b1b1b] text-white">
            <option>{value}</option>
          </select>
          <DownArrow className="absolute right-[5px]" />
        </>
      ) : (
        <>
          <input id={id} type="text" inputMode="decimal" defaultValue={value} className="w-full h-[19px] pl-[5px] rounded-[3px] bg-[#1b1b1b] text-white" />
          <Spinner className="absolute right-1 text-[#8a8a8a]" />
        </>
      )}
    </div>
  </div>
);

const Parameters = () => (
  <aside className="w-[400px] shrink-0 flex flex-col rounded-[3px] bg-[#525252] px-[5px] pb-[5px]">
    <div className="h-[29px] shrink-0 flex items-center text-[#d0d0d0]">
      <span className="w-[4px] h-5 bg-[radial-gradient(#a5a5a5_45%,transparent_50%)] bg-[length:2px_2px]" />
      <h2 className="ml-[6px] mr-auto">Parameters</h2>
      <button type="button" aria-label="Open" className="mr-3">
        <Icon w={12} h={9}><path d="M.7 8V.7h9.500V4" strokeWidth="1.300" /><path d="M2.500 4.500H12L10.500 9H0z" fill="currentColor" stroke="none" /></Icon>
      </button>
      <button type="button" aria-label="Save parameters" className="mr-1"><SaveIcon /></button>
    </div>
    <div className="flex-1 min-h-0 flex rounded-[3px] bg-[#292929] pl-[10px] pt-2 pb-[13px]">
      <div className="w-[358px] flex flex-col border-y border-[#575757] pt-[3px] pb-[2px]">
        <div className="flex-1 min-h-0 overflow-hidden pl-[5px] pr-[5px] flex flex-col gap-[5px] *:shrink-0">
          <div className="ml-auto w-[200px] h-[3px] rounded-b-[3px] bg-[#1b1b1b]" />
          {params.map(([type, label, value], i) => (
            type === 'heading' ? (
              <h3 key={label} className="h-[23px] mb-[3px] leading-[24px] border-b border-[#454545] text-[#757575]">{label}</h3>
            ) : (
              <ParamRow key={label} id={`param-${i}`} type={type} label={label} value={value} />
            )
          ))}
        </div>
      </div>
      <div className="ml-[5px] w-[7px] flex flex-col items-center text-[#808080] pt-[1px]">
        <Icon w={7} h={6}><path d="M3.500 0L7 6H0z" fill="currentColor" stroke="none" /></Icon>
        <div className="flex-[302]" />
        <div className="flex-[52] w-full rounded-full bg-[#7d7d7d]" />
        <div className="flex-[233]" />
        <Icon w={7} h={6}><path d="M3.500 6L7 0H0z" fill="currentColor" stroke="none" /></Icon>
      </div>
    </div>
  </aside>
);

const StatusBar = () => (
  <footer className="flex items-center h-[23px] shrink-0 px-[5px] text-white">
    <span className="size-[5px] rounded-full bg-[#0a8a0a] mr-[5px]" />
    <span className="mr-auto">Trading sessions: Frankfurt, London</span>
    <span className="mr-[9px]">Current time:&nbsp; 27/10/2026 05:07:16</span>
    <div className="relative flex items-center w-[44px] mr-[9px]">
      <select aria-label="Time zone" className="appearance-none w-full bg-transparent text-white">
        <option>UTC-4</option>
      </select>
      <DownArrow className="absolute right-0" />
    </div>
    <span>| 80 ms / 80 ms</span>
  </footer>
);

const App = () => {
  return (
    <div className="flex flex-col h-screen bg-[#292929] text-[11px] leading-4 font-['Liberation_Sans',Arial,sans-serif]">
      <TitleBar />
      <div className="flex flex-1 min-h-0">
        <Sidebar />
        <main className="flex-1 min-w-0 flex flex-col">
          <Toolbar />
          <div className="flex gap-[5px] px-[5px]">
            <Backtesting />
            <DrawTools />
          </div>
          <div className="flex flex-1 min-h-0 gap-[6px] px-[5px] pt-[5px]">
            <Results />
            <Parameters />
          </div>
          <StatusBar />
        </main>
      </div>
    </div>
  );
};

export default App;
